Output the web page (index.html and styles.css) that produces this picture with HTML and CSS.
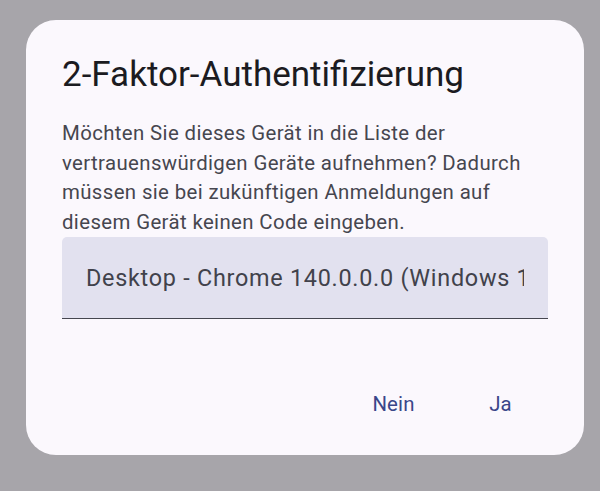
FILE: index.html
```html
<!DOCTYPE html>
<html lang="de">

<head>
    <meta charset="UTF-8">
    <meta name="viewport" content="width=device-width, initial-scale=1.0">
    <title>2-Faktor-Authentifizierung</title>
    <link rel="stylesheet" href="styles.css">
</head>

<body>
    <div class="dialog">
        <div class="title">2-Faktor-Authentifizierung</div>
        <div class="text">
            Möchten Sie dieses Gerät in die Liste der vertrauenswürdigen Geräte aufnehmen? Dadurch
            müssen sie bei zukünftigen Anmeldungen auf diesem Gerät keinen Code eingeben.
        </div>
        <div class="field">
            <div class="value">Desktop - Chrome 140.0.0.0 (Windows 10)</div>
        </div>
        <div class="actions">
            <button class="btn">Nein</button>
            <button class="btn">Ja</button>
        </div>
    </div>
</body>

</html>
```

FILE: styles.css
```css
body {
    margin: 0;
    background: #a7a5aa;
    font-family: Roboto, "Liberation Sans", sans-serif;
    padding: 20px 0 0 26px;
}

.dialog {
    width: 558px;
    height: 435px;
    box-sizing: border-box;
    background: #fbf8fd;
    border-radius: 30px;
    padding: 31px 36px 0 36px;
    display: flex;
    flex-direction: column;
}

.title {
    font-size: 35px;
    line-height: 47px;
    color: #1b1b21;
}

.text {
    margin-top: 21px;
    font-size: 20.4px;
    line-height: 29.6px;
    letter-spacing: 0.37px;
    color: #46464f;
}

.field {
    height: 82px;
    box-sizing: border-box;
    background: #e2e1ef;
    border-radius: 5px 5px 0 0;
    border-bottom: 1.5px solid #45464f;
    padding: 0 24px;
    display: flex;
    align-items: center;
}

.value {
    overflow: hidden;
    white-space: nowrap;
    font-size: 23.4px;
    letter-spacing: 0.73px;
    color: #41424b;
}

/* buttons sit in a row at the bottom right */
.actions {
    display: flex;
    justify-content: flex-end;
    gap: 12px;
    margin-top: 55px;
}

.btn {
    font-family: Roboto, "Liberation Sans", sans-serif;
    font-size: 20.4px;
    font-weight: 400;
    letter-spacing: 0.15px;
    color: #3a4689;
    background: none;
    border: none;
    min-width: 95px;
    height: 59px;
    padding: 0 18px;
}
```
